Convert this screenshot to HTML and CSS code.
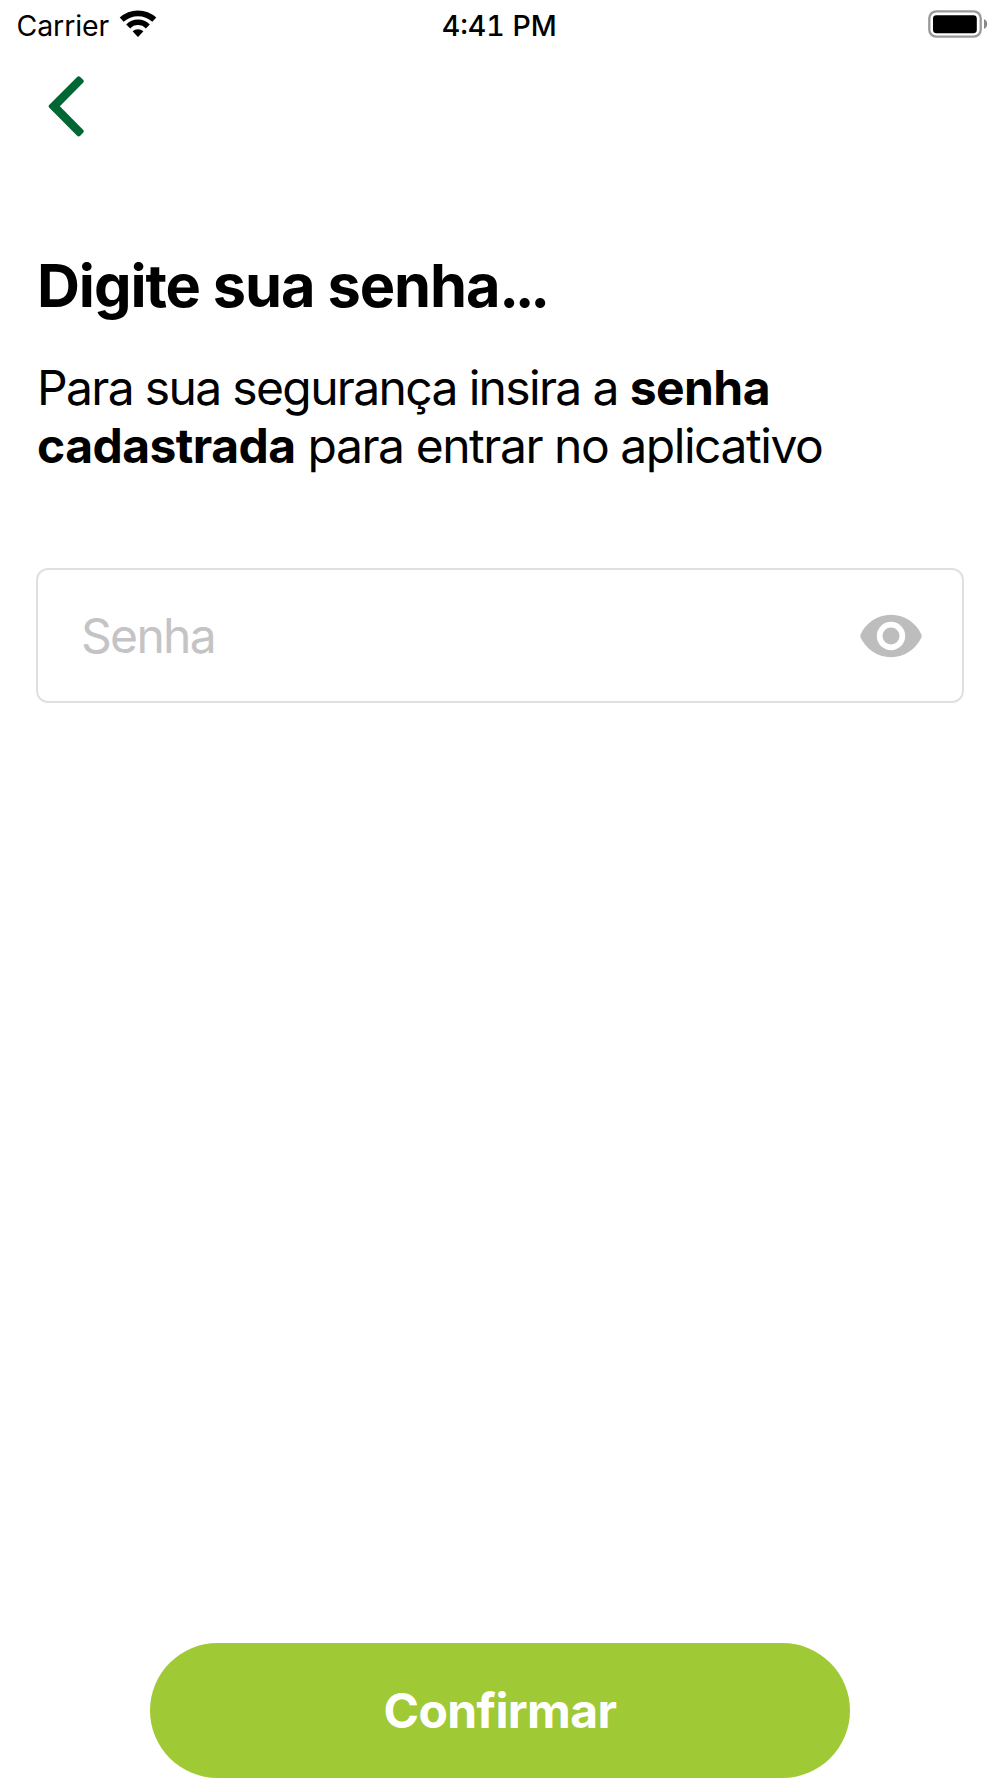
FILE: index.html
```html
<!DOCTYPE html>
<html lang="pt-BR">
<head>
<meta charset="utf-8">
<meta name="viewport" content="width=device-width, initial-scale=1">
<title>Digite sua senha</title>
<link rel="stylesheet" href="styles.css">
</head>
<body>
<div class="screen">
  <header class="status">
    <div class="status-left">
      <span class="carrier">Carrier</span>
      <svg class="wifi" width="38" height="30" viewBox="0 0 38 30" aria-hidden="true">
        <path d="M2.700 9.700A24 24 0 0 1 35.300 9.700" fill="none" stroke="#000" stroke-width="5.8"/>
        <path d="M9.200 16.500A13.500 13.500 0 0 1 28.800 16.500" fill="none" stroke="#000" stroke-width="5.5"/>
        <path d="M13.600 21.300A8 8 0 0 1 24.400 21.300L19.600 26.500Q19 27 18.400 26.500Z"/>
      </svg>
    </div>
    <span class="time">4:41 PM</span>
    <svg class="battery" width="60" height="30" viewBox="0 0 60 30" aria-hidden="true">
      <rect x="1.3" y="1.3" width="51.4" height="25.4" rx="7" fill="none" stroke="#999" stroke-width="2.3"/>
      <rect x="5" y="5.2" width="43.8" height="18" rx="3.4"/>
      <path d="M56 9Q59.2 10.6 59.2 14T56 19Z" fill="#888"/>
    </svg>
  </header>
  <nav class="nav">
    <button class="back" aria-label="Voltar">
      <svg width="40" height="64" viewBox="0 0 40 64" aria-hidden="true">
        <path d="M30.700 2.500L33.500 5.300L8.800 30.300L33.500 55.300L30.700 58.100L2.900 30.300Z" fill="#006633" stroke="#006633" stroke-width="4.400" stroke-linejoin="round"/>
      </svg>
    </button>
  </nav>
  <main class="content">
    <h1 class="title">Digite sua senha<span class="dots">...</span></h1>
    <p class="lead">Para sua segurança insira a <b>senha</b><br><b>cadastrada</b><span class="lead-end"> para entrar no aplicativo</span></p>
    <div class="field">
      <input class="input" type="password" placeholder="Senha" aria-label="Senha">
      <svg class="eye" width="62" height="44" viewBox="0 0 62 44" aria-hidden="true">
        <path fill="#bdbdbd" fill-rule="evenodd" d="M31 .8C17.2 .8 5.900 9.200 .6 20.500Q0 22 .6 23.500C5.900 34.800 17.200 43.200 31 43.200S56.100 34.800 61.400 23.500Q62 22 61.400 20.500C56.100 9.200 44.800 .8 31 .8ZM31 7.800a14.200 14.200 0 1 1 0 28.400a14.200 14.200 0 1 1 0-28.400ZM31 13.500a8.500 8.500 0 1 0 0 17a8.500 8.500 0 1 0 0-17Z"/>
      </svg>
    </div>
  </main>
  <footer class="actions">
    <button class="confirm">Confirmar</button>
  </footer>
</div>
</body>
</html>
```
FILE: styles.css
```css
* { box-sizing: border-box; }
body {
  margin: 0;
  background: #fff;
  color: #000;
  font-family: Inter, "Liberation Sans", sans-serif;
}
button { border: 0; padding: 0; font: inherit; background: none; }
svg { display: block; }
.screen {
  height: 1778px;
  display: flex;
  flex-direction: column;
  overflow: hidden;
}
.status {
  height: 50px;
  padding: 0 12px 0 16.5px;
  display: grid;
  grid-template-columns: 1fr auto 1fr;
  align-items: start;
  font-size: 28.5px;
  line-height: 52px;
}
.status-left { display: flex; gap: 10px; }
.carrier { letter-spacing: -0.1px; }
.wifi { margin-top: 10px; }
.time { font-weight: 500; font-variant-numeric: tabular-nums; margin-right: 6px; }
.battery { justify-self: end; margin-top: 10px; }
.nav { height: 150px; padding: 26px 0 0 48px; }
.content { padding: 49px 36px 0; }
.title {
  margin: 0 1px;
  font-size: 59.5px;
  line-height: 72px;
  font-weight: 700;
  letter-spacing: -1.1px;
}
.dots { letter-spacing: -4.4px; }
.lead {
  margin: 38px 1px 0;
  font-size: 48px;
  line-height: 58px;
  letter-spacing: -1.66px;
}
.lead b { letter-spacing: -0.55px; }
.lead-end { letter-spacing: -1.46px; }
.field {
  height: 135px;
  margin-top: 93px;
  padding: 0 40px 0 43px;
  border: 2px solid #e0e0e0;
  border-radius: 12px;
  display: flex;
  align-items: center;
}
.input {
  flex: 1;
  min-width: 0;
  height: 100%;
  padding: 0;
  border: 0;
  outline: 0;
  background: none;
  font: 48px Inter, "Liberation Sans", sans-serif;
  letter-spacing: -1.7px;
}
.input::placeholder { color: #c4c4c6; opacity: 1; }
.actions { margin-top: auto; display: flex; justify-content: center; }
.confirm {
  width: 700px;
  height: 135.5px;
  border-radius: 68px;
  background: #9fca36;
  color: #fff;
  font-size: 48px;
  font-weight: 700;
  letter-spacing: -0.6px;
}
```
